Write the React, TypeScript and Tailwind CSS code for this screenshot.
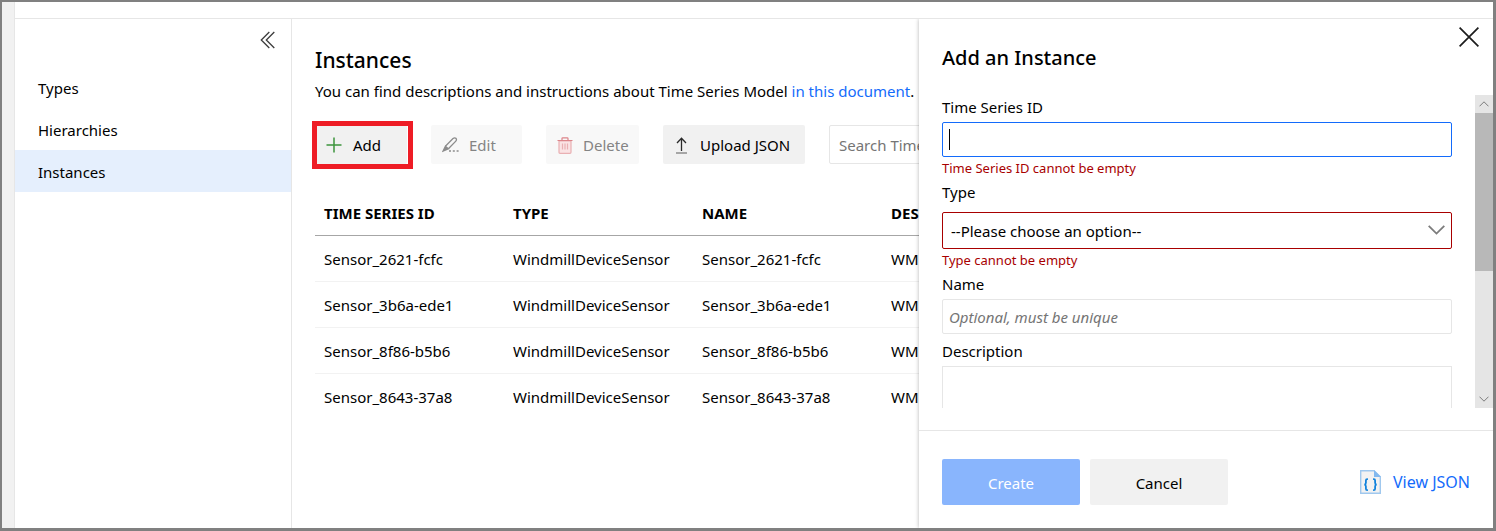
import type { ReactNode } from "react";

const navItems = ["Types", "Hierarchies", "Instances"];

const columns = ["TIME SERIES ID", "TYPE", "NAME", "DESCRIPTION"];

const rows = ["Sensor_2621-fcfc", "Sensor_3b6a-ede1", "Sensor_8f86-b5b6", "Sensor_8643-37a8"];

function CollapseIcon() {
  return (
    <svg width="16" height="18" viewBox="0 0 16 18" fill="none" stroke="#3c3c3c" strokeWidth="1.3" aria-hidden="true">
      <path d="M9.3 1 1.3 9l8 8M14.3 1l-8 8 8 8" />
    </svg>
  );
}

function PlusIcon() {
  return (
    <svg width="16" height="16" viewBox="0 0 16 16" fill="none" stroke="#3c943c" strokeWidth="1.5" aria-hidden="true">
      <path d="M8 .5v15M.5 8h15" />
    </svg>
  );
}

function EditIcon() {
  return (
    <svg width="17" height="16" viewBox="0 0 17 16" fill="none" stroke="#8c8c8c" strokeWidth="1.3" aria-hidden="true">
      <path d="M3.4 9.2 11 1.6Q12.6.4 14 1.4q1 1.2-.2 2.8L6.4 11.8" />
      <path d="M3.4 9.2 1 14.2l5.4-2.4Z" fill="#8c8c8c" />
      <path d="M7 14h2M10.8 14h2M14.6 14h2" strokeWidth="1.6" />
    </svg>
  );
}

function TrashIcon() {
  return (
    <svg width="16" height="17" viewBox="0 0 16 17" fill="none" stroke="#e9b0b3" strokeWidth="1.2" aria-hidden="true">
      <path d="M2 4h12v11.3q0 1-1 1H3q-1 0-1-1Z" fill="#fae3e4" />
      <path d="M.5 3.5h15M5 3V1.6q0-.8.8-.8h4.4q.8 0 .8.8V3" stroke="#dc8489" />
      <path d="M5.5 6.5v6M8 6.5v6M10.5 6.5v6" />
    </svg>
  );
}

function UploadIcon() {
  return (
    <svg width="13" height="17" viewBox="0 0 13 17" fill="none" stroke="#2b2b2b" strokeWidth="1.3" aria-hidden="true">
      <path d="M6.5 14V1.5M2 6l4.5-4.8L11 6" />
      <path d="M1 16h11" stroke="#8c8c8c" strokeWidth="1.5" />
    </svg>
  );
}

function CloseIcon() {
  return (
    <svg width="20" height="20" viewBox="0 0 20 20" fill="none" stroke="#1c1c1c" strokeWidth="1.7" aria-hidden="true">
      <path d="m.6.6 18.8 18.8M19.4.6.6 19.4" />
    </svg>
  );
}

function ScrollArrow({ down = false }: { down?: boolean }) {
  return (
    <svg width="10" height="6" viewBox="0 0 10 6" fill="none" stroke="#7c7c7c" strokeWidth="1" aria-hidden="true">
      <path d={down ? "M.5.7 5 5.2 9.5.7" : "M.5 5.3 5 .8l4.5 4.5"} />
    </svg>
  );
}

function JsonIcon() {
  return (
    <svg width="21" height="24" viewBox="0 0 21 24" fill="none" aria-hidden="true">
      <path d="M.7.7H14l6.3 6.1v16.5H.7Z" fill="#f2f2f2" stroke="#a0c8ee" strokeWidth="1.4" />
      <path d="M14 0v7h7Z" fill="#83b9ef" />
      <g stroke="#1082dc" strokeWidth="1.8">
        <path d="M7.9 9.2H7.2q-1.3 0-1.3 1.4v2.2q0 1.7-1.5 1.9 1.5.2 1.5 1.9v2.2q0 1.4 1.3 1.4h.7" />
        <path d="M13.1 9.2h.7q1.3 0 1.3 1.4v2.2q0 1.7 1.5 1.9-1.5.2-1.5 1.9v2.2q0 1.4-1.3 1.4h-.7" />
      </g>
    </svg>
  );
}

function FieldLabel({ htmlFor, children }: { htmlFor: string; children: ReactNode }) {
  return (
    <label htmlFor={htmlFor} className="mb-[6px] block leading-[18px]">
      {children}
    </label>
  );
}

function Sidebar() {
  return (
    <nav className="flex w-[277px] shrink-0 flex-col border-r border-[#e6e6e6]">
      <div className="flex h-[47px] shrink-0 items-start justify-end pt-3 pr-[15px]">
        <button type="button" aria-label="Collapse menu">
          <CollapseIcon />
        </button>
      </div>
      {navItems.map((item) => (
        <a
          key={item}
          href={`#${item.toLowerCase()}`}
          className={`flex h-[42px] shrink-0 items-center pt-[2px] pl-[23px] ${item === "Instances" ? "bg-[#e5effd]" : ""}`}
        >
          {item}
        </a>
      ))}
    </nav>
  );
}

function Instances() {
  return (
    <main className="min-w-0 flex-1 overflow-hidden pt-[26px] pl-[23px]">
      <h1 className="text-[21px] leading-[30px] font-medium">Instances</h1>
      <p className="mt-1 leading-6 whitespace-nowrap">
        You can find descriptions and instructions about Time Series Model{" "}
        <a href="#document" className="text-[#136bfb]">
          in this document
        </a>
        .
      </p>
      <div className="mt-[22px] flex h-[39px] gap-6 whitespace-nowrap">
        <div className="relative shrink-0">
          <button type="button" className="flex h-full w-[92px] items-center gap-[11px] rounded-xs bg-[#f1f1f1] pt-px pl-[11px]">
            <PlusIcon />
            Add
          </button>
          <span className="pointer-events-none absolute -top-1 -left-[3px] h-12 w-[101px] border-5 border-[#ee1c25]" />
        </div>
        <button type="button" disabled className="flex w-[91px] shrink-0 items-center gap-[10px] rounded-xs bg-[#f8f8f8] pt-px pl-[11px] text-[#848484]">
          <EditIcon />
          Edit
        </button>
        <button type="button" disabled className="flex w-[93px] shrink-0 items-center gap-[10px] rounded-xs bg-[#f8f8f8] pt-px pl-[11px] text-[#848484]">
          <TrashIcon />
          Delete
        </button>
        <button type="button" className="flex w-[142px] shrink-0 items-center gap-3 rounded-xs bg-[#f1f1f1] pt-px pl-3">
          <UploadIcon />
          Upload JSON
        </button>
        <input
          type="search"
          aria-label="Search Time Series Instances"
          placeholder="Search Time Series Instances"
          className="w-[280px] shrink-0 rounded-xs border border-[#e6e6e6] px-[9px] pt-px placeholder:text-[#757575]"
        />
      </div>
      <table className="mt-[26px] w-[756px] table-fixed text-left">
        <thead>
          <tr className="h-[45px] border-b border-[#a6a6a6]">
            {columns.map((column) => (
              <th key={column} className="pt-px pl-[9px] font-bold">
                {column}
              </th>
            ))}
          </tr>
        </thead>
        <tbody>
          {rows.map((name) => (
            <tr key={name} className="h-[46px] border-b border-[#f2f2f2] last:border-b-0">
              <td className="pt-[2px] pl-[9px]">{name}</td>
              <td className="pt-[2px] pl-[9px]">WindmillDeviceSensor</td>
              <td className="pt-[2px] pl-[9px]">{name}</td>
              <td className="pt-[2px] pl-[9px]">WM</td>
            </tr>
          ))}
        </tbody>
      </table>
    </main>
  );
}

function AddInstancePanel() {
  return (
    <form className="relative flex w-[574px] shrink-0 flex-col bg-white shadow-[0_0_4px_rgba(0,0,0,0.3)]">
      <header className="flex h-[76px] shrink-0 items-start justify-between pt-2 pr-[14px] pl-[23px]">
        <h2 className="pt-4 text-[20px] leading-[30px] font-medium">Add an Instance</h2>
        <button type="button" aria-label="Close">
          <CloseIcon />
        </button>
      </header>
      <div className="mb-[22px] flex min-h-0 flex-1">
        <div className="min-w-0 flex-1 overflow-hidden pt-[3px] pr-[23px] pl-[23px]">
          <FieldLabel htmlFor="series-id">Time Series ID</FieldLabel>
          <div className="relative">
            <input
              id="series-id"
              placeholder=" "
              className="peer block h-[35px] w-full rounded-xs border border-[#136bfb] px-[6px] outline-none placeholder-shown:caret-transparent"
            />
            <span className="pointer-events-none absolute top-[7px] left-[7px] hidden h-[21px] w-px bg-black peer-placeholder-shown:block" />
          </div>
          <p className="mb-1 text-[13px] leading-[22px] text-[#a80000]">Time Series ID cannot be empty</p>
          <FieldLabel htmlFor="type">Type</FieldLabel>
          <div className="relative mt-[11px]">
            <select id="type" className="block h-[37px] w-full appearance-none rounded-xs border border-[#a80000] bg-white px-2 pt-px">
              <option>--Please choose an option--</option>
            </select>
            <svg
              className="pointer-events-none absolute top-[13px] right-[7px]"
              width="17"
              height="10"
              viewBox="0 0 17 10"
              fill="none"
              stroke="#7c7c7c"
              strokeWidth="1.8"
              aria-hidden="true"
            >
              <path d="m.7.8 7.8 7.8L16.3.8" />
            </svg>
          </div>
          <p className="mb-1 text-[13px] leading-[22px] text-[#a80000]">Type cannot be empty</p>
          <FieldLabel htmlFor="name">Name</FieldLabel>
          <input
            id="name"
            placeholder="Optional, must be unique"
            className="mb-2 block h-[35px] w-full rounded-xs border border-[#e6e6e6] px-[6px] placeholder:text-[#757575] placeholder:italic"
          />
          <FieldLabel htmlFor="description">Description</FieldLabel>
          <textarea id="description" rows={4} className="block w-full resize-none border border-[#e6e6e6] px-[6px]" />
        </div>
        <div className="flex w-[18px] shrink-0 flex-col bg-[#e5e5e5]" aria-hidden="true">
          <div className="flex h-[18px] shrink-0 items-center justify-center">
            <ScrollArrow />
          </div>
          <div className="min-h-0 flex-1">
            <div className="h-[57%] bg-[#b8b8b8]" />
          </div>
          <div className="flex h-[18px] shrink-0 items-center justify-center">
            <ScrollArrow down />
          </div>
        </div>
      </div>
      <footer className="flex h-[98px] shrink-0 items-center gap-[10px] border-t border-[#e6e6e6] pt-1 pr-[23px] pl-[23px]">
        <button type="submit" disabled className="h-[46px] w-[138px] rounded-xs bg-[#89b5fd] pt-[3px] text-white">
          Create
        </button>
        <button type="button" className="h-[46px] w-[138px] rounded-xs bg-[#f1f1f1] pt-[3px]">
          Cancel
        </button>
        <a href="#json" className="ml-auto flex items-center gap-3 text-[16px] text-[#136bfb]">
          <JsonIcon />
          View JSON
        </a>
      </footer>
    </form>
  );
}

export default function App() {
  return (
    <div className="flex h-screen border-t-2 border-r-3 border-b-3 border-l-2 border-[#808080] bg-white font-['Noto_Sans','Open_Sans',sans-serif] text-[15px] text-black">
      <div className="w-[13px] shrink-0 border-r border-[#e6e6e6] bg-[#f1f1f1]" />
      <div className="flex min-w-0 flex-1 flex-col">
        <div className="h-[17px] shrink-0 border-b border-[#e6e6e6]" />
        <div className="flex min-h-0 flex-1 overflow-hidden">
          <Sidebar />
          <Instances />
          <AddInstancePanel />
        </div>
      </div>
    </div>
  );
}
